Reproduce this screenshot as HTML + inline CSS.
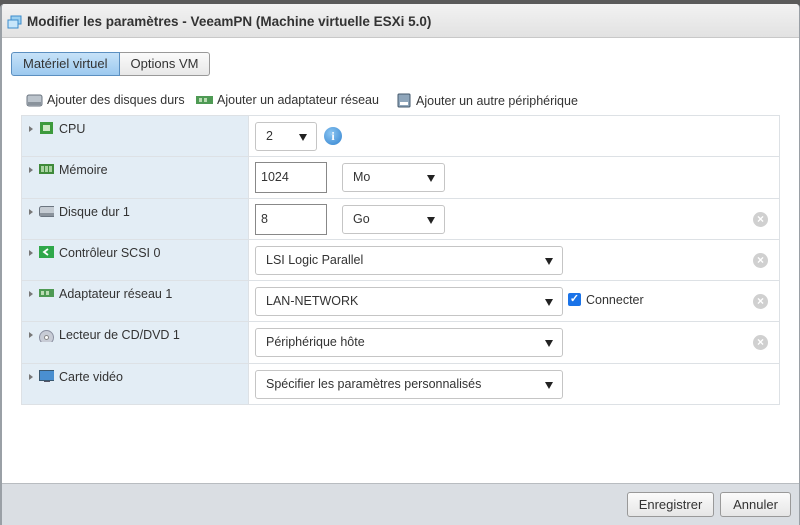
<!DOCTYPE html>
<html><head><meta charset="utf-8"><style>
*{box-sizing:border-box;margin:0;padding:0}
body{width:800px;height:525px;overflow:hidden;font-family:"Liberation Sans",sans-serif;font-size:13px;color:#333;background:#fff;position:relative}
.top{position:absolute;left:0;top:0;width:800px;height:8px;background:#5a5a5a}
.dlg{position:absolute;left:0;top:4px;width:800px;height:521px;border-left:2px solid #9aa0a6;border-right:1px solid #9aa0a6;border-radius:4px 4px 0 0;background:#fff;overflow:hidden}
.title{height:34px;background:linear-gradient(#f2f2f2,#e2e2e2);border-bottom:1px solid #c8c8c8;font-weight:bold;font-size:13.5px;line-height:36px;padding-left:25px;position:relative;color:#333}
.tabs{position:absolute;left:9px;top:48px;display:flex}
.tab{height:24px;line-height:22px;border:1px solid #999;padding:0 11px;font-size:13px;background:linear-gradient(#fafafa,#e8e8e8)}
.tab.a{background:linear-gradient(#c7e2f8,#9cc9ef);border-color:#5b8fc0;border-radius:3px 0 0 3px}
.tab.b{border-left:none;border-radius:0 3px 3px 0}
.add{position:absolute;top:89px;font-size:12.5px;display:flex;align-items:center}
table{position:absolute;left:19px;top:111px;width:759px;border-collapse:collapse}
td{border:1px solid #dde1e5;height:41.3px;vertical-align:top}
td.l{width:227px;background:#e3edf5;padding:6px 0 0 7px;font-size:12.5px}
td.r{position:relative}
.ar{display:inline-block;width:0;height:0;border-left:4px solid #777;border-top:3.5px solid transparent;border-bottom:3.5px solid transparent;margin-right:6px;vertical-align:1px}
.ic{display:inline-block;width:15px;height:12px;vertical-align:-1px;margin-right:5px}
.sel{position:absolute;top:6px;height:29px;border:1px solid #c5c5c5;border-radius:3px;background:#fff;line-height:27px;padding-left:10px;font-size:12.5px}
.sel:after{content:"";position:absolute;right:9px;top:11px;border-left:4.5px solid transparent;border-right:4.5px solid transparent;border-top:7px solid #222}
.inp{position:absolute;top:5px;left:6px;width:72px;height:31px;border:1px solid #888;line-height:29px;padding-left:5px;font-size:12.5px}
.x{position:absolute;right:11px;top:13px;width:15px;height:15px;border-radius:50%;background:#d0d0d0;color:#fff;font-size:12px;line-height:15px;text-align:center;font-weight:bold}
.foot{position:absolute;left:0;top:479px;width:800px;height:43px;background:#dadee3;border-top:1px solid #b8bcc0}
.btn{position:absolute;top:8px;height:25px;border:1px solid #999;border-radius:3px;background:linear-gradient(#fbfbfb,#e6e6e6);line-height:23px;text-align:center;font-size:13px}
</style></head><body>
<div class="top"></div>
<div class="dlg">
<div class="title"><svg style="position:absolute;left:5px;top:11px" width="16" height="15"><rect x="4" y="1" width="10" height="8" fill="#9cd0f0" stroke="#3c8ccc"/><rect x="1" y="5" width="10" height="8" fill="#c8e6fa" stroke="#3c8ccc"/></svg>Modifier les paramètres - VeeamPN (Machine virtuelle ESXi 5.0)</div>
<div class="tabs"><div class="tab a">Matériel virtuel</div><div class="tab b">Options VM</div></div>
<div class="add" style="left:24px"><svg width="17" height="13" style="margin-right:4px"><rect x="1" y="1" width="15" height="11" rx="2" fill="#bcc4cc" stroke="#6b7580"/><rect x="2" y="8" width="13" height="3" fill="#8a939c"/></svg>Ajouter des disques durs</div>
<div class="add" style="left:194px"><svg width="17" height="10" style="margin-right:4px"><rect x="0" y="1" width="17" height="8" fill="#4e9a54"/><rect x="3" y="3" width="3" height="4" fill="#b9dcb3"/><rect x="8" y="3" width="3" height="4" fill="#b9dcb3"/></svg>Ajouter un adaptateur réseau</div>
<div class="add" style="left:395px"><svg width="14" height="15" style="margin-right:5px"><rect x="1" y="1" width="12" height="13" rx="1" fill="#8fa6bb" stroke="#45596c"/><rect x="3" y="9" width="8" height="3" fill="#fff"/></svg>Ajouter un autre périphérique</div>
<table>
<tr><td class="l"><span class="ar"></span><svg class="ic"><rect x="1" y="0" width="13" height="12" fill="#3d9a3d"/><rect x="4" y="3" width="7" height="6" fill="#cde8c5"/></svg>CPU</td><td class="r"><div class="sel" style="left:6px;width:62px">2</div><div style="position:absolute;left:75px;top:11px;width:18px;height:18px;border-radius:50%;background:radial-gradient(circle at 40% 35%,#8cc6f2,#3182cf);color:#fff;font-weight:bold;font-size:12px;text-align:center;line-height:18px;font-family:'Liberation Serif',serif">i</div></td></tr>
<tr><td class="l"><span class="ar"></span><svg class="ic"><rect x="0" y="1" width="15" height="10" fill="#3f8a3a"/><rect x="2" y="3" width="3" height="6" fill="#a8d3a0"/><rect x="6" y="3" width="3" height="6" fill="#a8d3a0"/><rect x="10" y="3" width="3" height="6" fill="#a8d3a0"/></svg>Mémoire</td><td class="r"><div class="inp">1024</div><div class="sel" style="left:93px;width:103px">Mo</div></td></tr>
<tr><td class="l"><span class="ar"></span><svg class="ic" width="17" height="12"><rect x="0.5" y="1.5" width="16" height="10" rx="2" fill="#c5ccd3" stroke="#6b7580"/><rect x="1" y="8" width="15" height="3" fill="#8a939c"/></svg>Disque dur 1</td><td class="r"><div class="inp">8</div><div class="sel" style="left:93px;width:103px">Go</div><div class="x">×</div></td></tr>
<tr><td class="l"><span class="ar"></span><svg class="ic"><rect x="0" y="0" width="15" height="12" fill="#2fa84a"/><path d="M9 3 L5 6 L9 9" stroke="#fff" stroke-width="1.8" fill="none"/></svg>Contrôleur SCSI 0</td><td class="r"><div class="sel" style="left:6px;width:308px">LSI Logic Parallel</div><div class="x">×</div></td></tr>
<tr><td class="l"><span class="ar"></span><svg class="ic"><rect x="0" y="2" width="15" height="8" fill="#4e9a54"/><rect x="2" y="4" width="3" height="4" fill="#b9dcb3"/><rect x="7" y="4" width="3" height="4" fill="#b9dcb3"/></svg>Adaptateur réseau 1</td><td class="r"><div class="sel" style="left:6px;width:308px">LAN-NETWORK</div><div style="position:absolute;left:319px;top:12px;width:13px;height:13px;background:#1a73e8;border-radius:2px;color:#fff;font-size:11px;line-height:13px;text-align:center;font-weight:bold">✓</div><div style="position:absolute;left:337px;top:12px;font-size:12.5px">Connecter</div><div class="x">×</div></td></tr>
<tr><td class="l"><span class="ar"></span><svg class="ic" width="15" height="15" style="vertical-align:-3px"><circle cx="7.5" cy="7.5" r="7" fill="#c8ccd6" stroke="#8a8fa0"/><circle cx="7.5" cy="7.5" r="2" fill="#fff" stroke="#888"/></svg>Lecteur de CD/DVD 1</td><td class="r"><div class="sel" style="left:6px;width:308px">Périphérique hôte</div><div class="x">×</div></td></tr>
<tr><td class="l"><span class="ar"></span><svg class="ic" width="16" height="14"><rect x="0.5" y="0.5" width="15" height="10" fill="#4a8fd0" stroke="#3a5870"/><rect x="5" y="11" width="6" height="2" fill="#556"/></svg>Carte vidéo</td><td class="r"><div class="sel" style="left:6px;width:308px">Spécifier les paramètres personnalisés</div></td></tr>
</table>
<div class="foot"><div class="btn" style="left:625px;width:87px">Enregistrer</div><div class="btn" style="left:718px;width:71px">Annuler</div></div>
</div>
</body></html>
